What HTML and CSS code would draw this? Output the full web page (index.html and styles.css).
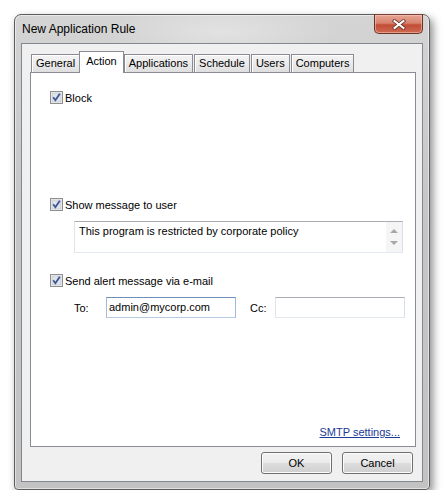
FILE: index.html
```html
<!DOCTYPE html>
<html lang="en">
<head>
    <meta charset="UTF-8">
    <title>New Application Rule</title>
    <link rel="stylesheet" href="styles.css">
</head>
<body>
    <div class="window">
        <div class="titlebar">
            <span class="title">New Application Rule</span>
            <div class="close-btn">
                <svg width="14" height="11" viewBox="0 0 14 11">
                    <path d="M2.5 2 L11.5 9 M11.5 2 L2.5 9" stroke="#6a3329" stroke-width="3.6" stroke-linecap="square"/>
                    <path d="M2.5 2 L11.5 9 M11.5 2 L2.5 9" stroke="#fff" stroke-width="2" stroke-linecap="square"/>
                </svg>
            </div>
        </div>

        <div class="client">
            <div class="tabs">
                <div class="tab">General</div>
                <div class="tab selected">Action</div>
                <div class="tab">Applications</div>
                <div class="tab">Schedule</div>
                <div class="tab">Users</div>
                <div class="tab">Computers</div>
            </div>

            <div class="panel">
                <label class="check-row row-block">
                    <svg class="checkbox" width="13" height="13" viewBox="0 0 13 13">
                        <rect x="0.5" y="0.5" width="12" height="12" fill="#f4f4f4" stroke="#8e8f8f"/>
                        <rect x="2" y="2" width="9" height="9" fill="#dfe3ea" stroke="#b8bcc4" stroke-width="0.6"/>
                        <path d="M3.2 6.2 L5.4 9.2 L9.8 2.8" fill="none" stroke="#3d5596" stroke-width="1.8"/>
                    </svg>
                    <span>Block</span>
                </label>

                <label class="check-row row-show">
                    <svg class="checkbox" width="13" height="13" viewBox="0 0 13 13">
                        <rect x="0.5" y="0.5" width="12" height="12" fill="#f4f4f4" stroke="#8e8f8f"/>
                        <rect x="2" y="2" width="9" height="9" fill="#dfe3ea" stroke="#b8bcc4" stroke-width="0.6"/>
                        <path d="M3.2 6.2 L5.4 9.2 L9.8 2.8" fill="none" stroke="#3d5596" stroke-width="1.8"/>
                    </svg>
                    <span>Show message to user</span>
                </label>

                <div class="message-box">
                    <div class="message-text">This program is restricted by corporate policy</div>
                    <div class="scroll">
                        <span class="arrow-up"></span>
                        <span class="arrow-down"></span>
                    </div>
                </div>

                <label class="check-row row-send">
                    <svg class="checkbox" width="13" height="13" viewBox="0 0 13 13">
                        <rect x="0.5" y="0.5" width="12" height="12" fill="#f4f4f4" stroke="#8e8f8f"/>
                        <rect x="2" y="2" width="9" height="9" fill="#dfe3ea" stroke="#b8bcc4" stroke-width="0.6"/>
                        <path d="M3.2 6.2 L5.4 9.2 L9.8 2.8" fill="none" stroke="#3d5596" stroke-width="1.8"/>
                    </svg>
                    <span>Send alert message via e-mail</span>
                </label>

                <div class="mail-row">
                    <span class="mail-label">To:</span>
                    <div class="textbox focused">admin@mycorp.com</div>
                    <span class="mail-label cc">Cc:</span>
                    <div class="textbox"></div>
                </div>

                <div class="link-row">
                    <a class="link" href="#">SMTP settings...</a>
                </div>
            </div>

            <div class="buttons">
                <div class="btn">OK</div>
                <div class="btn">Cancel</div>
            </div>
        </div>
    </div>
</body>
</html>
```

FILE: styles.css
```css
html, body {
    margin: 0;
    padding: 0;
    background: #fff;
}
body {
    font-family: "Liberation Sans", Arial, sans-serif;
    font-size: 11px;
    color: #000;
}
.window {
    box-sizing: border-box;
    width: 416px;
    height: 476px;
    margin: 14px 0 0 14px;
    padding: 0 6px 7px 6px;
    border: 1px solid #5c5c5c;
    border-radius: 7px 7px 4px 4px;
    background: linear-gradient(to bottom, #d4d4d4, #c6c6c6 40%, #c2c2c2);
    box-shadow: 3px 4px 8px rgba(0, 0, 0, 0.45), 0 0 0 1px rgba(255, 255, 255, 0.5) inset;
    display: flex;
    flex-direction: column;
}
.titlebar {
    height: 28px;
    display: flex;
    justify-content: space-between;
    align-items: flex-start;
    background: radial-gradient(ellipse 120px 30px at 50% 60%, rgba(255, 255, 255, 0.35), rgba(255, 255, 255, 0));
}
.title {
    margin: 7px 0 0 1px;
    line-height: 15px;
    font-size: 12px;
}
.close-btn {
    width: 47px;
    height: 18px;
    margin-top: -1px;
    border: 1px solid #6b3328;
    border-top-color: #7a4034;
    border-radius: 0 0 5px 5px;
    background: linear-gradient(to bottom, #e6a593, #d88370 45%, #c24d36 55%, #cf6a52);
    box-shadow: inset 0 0 0 1px rgba(255, 210, 200, 0.5);
    display: flex;
    justify-content: center;
    align-items: center;
}
.client {
    flex: 1;
    display: flex;
    flex-direction: column;
    padding: 7px 6px 7px 8px;
    background: #f0f0f0;
    border: 1px solid #828790;
}
.tabs {
    display: flex;
    align-items: flex-end;
    height: 21px;
    padding-left: 1px;
    position: relative;
    z-index: 1;
}
.tab {
    box-sizing: border-box;
    height: 18px;
    padding: 0 4px;
    margin-right: 1px;
    line-height: 17px;
    border: 1px solid #898c95;
    border-bottom: none;
    background: linear-gradient(to bottom, #f3f3f3, #ebebeb 50%, #dedede);
    box-shadow: inset 1px 1px 0 #fff;
}
.tab.selected {
    height: 22px;
    margin: 0 -1px -1px -2px;
    padding: 0 6px;
    line-height: 19px;
    background: #fff;
    box-shadow: none;
}
.tab.selected + .tab {
    margin-left: 1px;
}
.panel {
    flex: 1;
    display: flex;
    flex-direction: column;
    padding: 17px 15px 8px 19px;
    background: #fff;
    border: 1px solid #898c95;
}
.check-row {
    display: flex;
    align-items: center;
    height: 15px;
    gap: 2px;
}
.checkbox {
    flex: none;
}
.row-show {
    margin-top: 92px;
}
.row-send {
    margin-top: 20px;
}
.message-box {
    box-sizing: border-box;
    height: 32px;
    width: 329px;
    margin: 9px 0 0 24px;
    display: flex;
    border: 1px solid #abadb3;
    border-color: #abadb3 #dbdfe6 #e3e9ef #e2e3ea;
}
.message-text {
    flex: 1;
    padding: 3px 0 0 4px;
}
.scroll {
    width: 16px;
    background: #f5f5f5;
    display: flex;
    flex-direction: column;
    justify-content: space-between;
    align-items: center;
    padding: 7px 0 7px 0;
}
.arrow-up {
    border-left: 4px solid transparent;
    border-right: 4px solid transparent;
    border-bottom: 4px solid #a8a8a8;
}
.arrow-down {
    border-left: 4px solid transparent;
    border-right: 4px solid transparent;
    border-top: 4px solid #a8a8a8;
}
.mail-row {
    display: flex;
    align-items: center;
    margin: 9px 0 0 24px;
}
.mail-label {
    flex: none;
    width: 32px;
}
.mail-label.cc {
    width: 25px;
    margin-left: 14px;
}
.textbox {
    flex: none;
    box-sizing: border-box;
    width: 130px;
    height: 21px;
    padding: 2px 0 0 2px;
    line-height: 15px;
    border: 1px solid #abadb3;
    border-color: #abadb3 #dbdfe6 #e3e9ef #e2e3ea;
}
.textbox.focused {
    border-color: #6d8fb8 #a4bbd6 #b7cbe2 #a4bbd6;
}
.link-row {
    margin-top: auto;
    display: flex;
    justify-content: flex-end;
}
.link {
    color: #1c3a96;
    text-decoration: underline;
}
.buttons {
    display: flex;
    justify-content: flex-end;
    gap: 10px;
    margin-top: 5px;
    padding-right: 3px;
}
.btn {
    box-sizing: border-box;
    width: 71px;
    height: 22px;
    line-height: 20px;
    text-align: center;
    border: 1px solid #707070;
    border-radius: 3px;
    background: linear-gradient(to bottom, #f2f2f2, #ebebeb 50%, #dddddd 51%, #cfcfcf);
    box-shadow: inset 0 0 0 1px #fcfcfc;
}
```
